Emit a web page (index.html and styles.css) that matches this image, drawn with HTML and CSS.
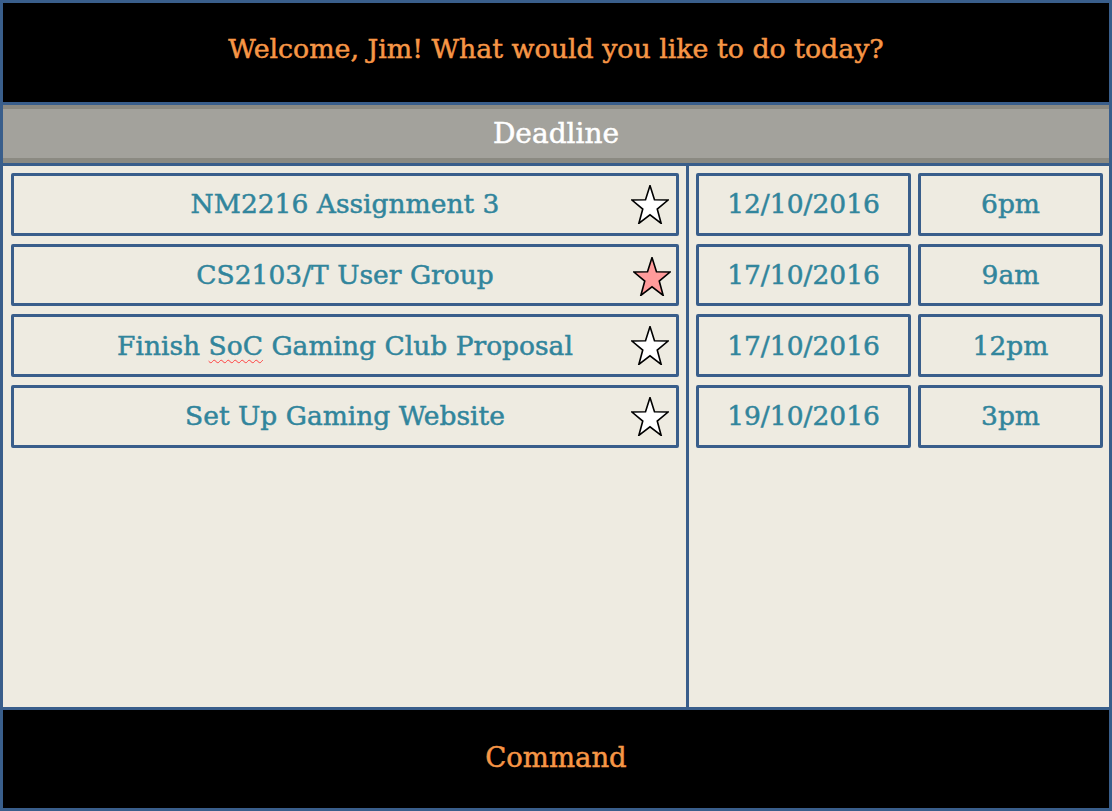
FILE: index.html
```html
<!DOCTYPE html>
<html>
<head>
<meta charset="utf-8">
<link rel="stylesheet" href="styles.css">
</head>
<body>
<div class="app">
  <header class="welcome"><span>Welcome, Jim! What would you like to do today?</span></header>
  <div class="bar"><span>Deadline</span></div>
  <main class="content">
    <section class="tasks">
      <div class="box task"><span>NM2216 Assignment 3</span>
        <svg class="star" viewBox="1 1.5 38 35.4" preserveAspectRatio="none"><polygon points="20,2 24.47,14.85 38.07,15.13 27.23,23.35 31.17,36.37 20,28.6 8.83,36.37 12.77,23.35 1.93,15.13 15.53,14.85" fill="#fff" stroke="#000" stroke-width="1.6" vector-effect="non-scaling-stroke"/></svg>
      </div>
      <div class="box task"><span>CS2103/T User Group</span>
        <svg class="star star-on" viewBox="1 1.5 38 35.4" preserveAspectRatio="none"><polygon points="20,2 24.47,14.85 38.07,15.13 27.23,23.35 31.17,36.37 20,28.6 8.83,36.37 12.77,23.35 1.93,15.13 15.53,14.85" fill="#ff9b9b" stroke="#000" stroke-width="1.6" vector-effect="non-scaling-stroke"/></svg>
      </div>
      <div class="box task"><span>Finish <span class="typo">SoC</span> Gaming Club Proposal</span>
        <svg class="star" viewBox="1 1.5 38 35.4" preserveAspectRatio="none"><polygon points="20,2 24.47,14.85 38.07,15.13 27.23,23.35 31.17,36.37 20,28.6 8.83,36.37 12.77,23.35 1.93,15.13 15.53,14.85" fill="#fff" stroke="#000" stroke-width="1.6" vector-effect="non-scaling-stroke"/></svg>
      </div>
      <div class="box task"><span>Set Up Gaming Website</span>
        <svg class="star" viewBox="1 1.5 38 35.4" preserveAspectRatio="none"><polygon points="20,2 24.47,14.85 38.07,15.13 27.23,23.35 31.17,36.37 20,28.6 8.83,36.37 12.77,23.35 1.93,15.13 15.53,14.85" fill="#fff" stroke="#000" stroke-width="1.6" vector-effect="non-scaling-stroke"/></svg>
      </div>
    </section>
    <section class="deadlines">
      <div class="drow"><div class="box date"><span>12/10/2016</span></div><div class="box time"><span>6pm</span></div></div>
      <div class="drow"><div class="box date"><span>17/10/2016</span></div><div class="box time"><span>9am</span></div></div>
      <div class="drow"><div class="box date"><span>17/10/2016</span></div><div class="box time"><span>12pm</span></div></div>
      <div class="drow"><div class="box date"><span>19/10/2016</span></div><div class="box time"><span>3pm</span></div></div>
    </section>
  </main>
  <footer class="command"><span>Command</span></footer>
</div>
</body>
</html>
```

FILE: styles.css
```css
* { box-sizing: border-box; }
html, body { margin: 0; padding: 0; background: #000; }
body {
  width: 1112px;
  height: 811px;
  font-family: "DejaVu Serif", "Liberation Serif", serif;
  -webkit-text-stroke: 0.5px currentColor;
}

.app {
  width: 1112px;
  height: 811px;
  border: 3px solid #395e8b;
  display: flex;
  flex-direction: column;
  background: #000;
}

.welcome {
  height: 102px;
  border-bottom: 3px solid #395e8b;
  background: #000;
  color: #f79646;
  font-size: 26.8px;
  display: flex;
  align-items: center;
  justify-content: center;
  padding-bottom: 8px;
}

.bar {
  height: 58px;
  background: #a3a29c;
  border-top: 4px solid #8b8a82;
  border-bottom: 5px solid #8b8a82;
  color: #fff;
  font-size: 28px;
  display: flex;
  align-items: center;
  justify-content: center;
}

.content {
  height: 544px;
  border-top: 3px solid #395e8b;
  background: #eeebe1;
  display: grid;
  grid-template-columns: 683px 3px 420px;
}

.tasks {
  grid-column: 1;
  padding: 7px 7px 0 8px;
  display: flex;
  flex-direction: column;
  gap: 8px;
  border-right: 3px solid #395e8b;
  width: 686px;
}

.deadlines {
  grid-column: 3;
  padding: 7px 6px 0 7px;
  display: flex;
  flex-direction: column;
  gap: 8px;
}

.box {
  height: 62.7px;
  border: 3px solid #395e8b;
  border-radius: 2px;
  color: #31859c;
  font-size: 26.5px;
  display: flex;
  align-items: center;
  justify-content: center;
  position: relative;
  white-space: nowrap;
  padding-bottom: 1px;
}

.drow {
  display: flex;
  gap: 7px;
}
.date { width: 215px; }
.time { flex: 1; }

.star {
  position: absolute;
  right: 7px;
  top: 9px;
  width: 38px;
  height: 39px;
}
.star-on { right: 5px; top: 10px; }

.typo {
  text-decoration: underline wavy #ff4040;
  text-decoration-thickness: 1px;
  text-underline-offset: 4px;
}

.command {
  flex: 1;
  border-top: 3px solid #395e8b;
  background: #000;
  color: #f79646;
  font-size: 27.5px;
  display: flex;
  align-items: center;
  justify-content: center;
  padding-bottom: 4px;
}
```
